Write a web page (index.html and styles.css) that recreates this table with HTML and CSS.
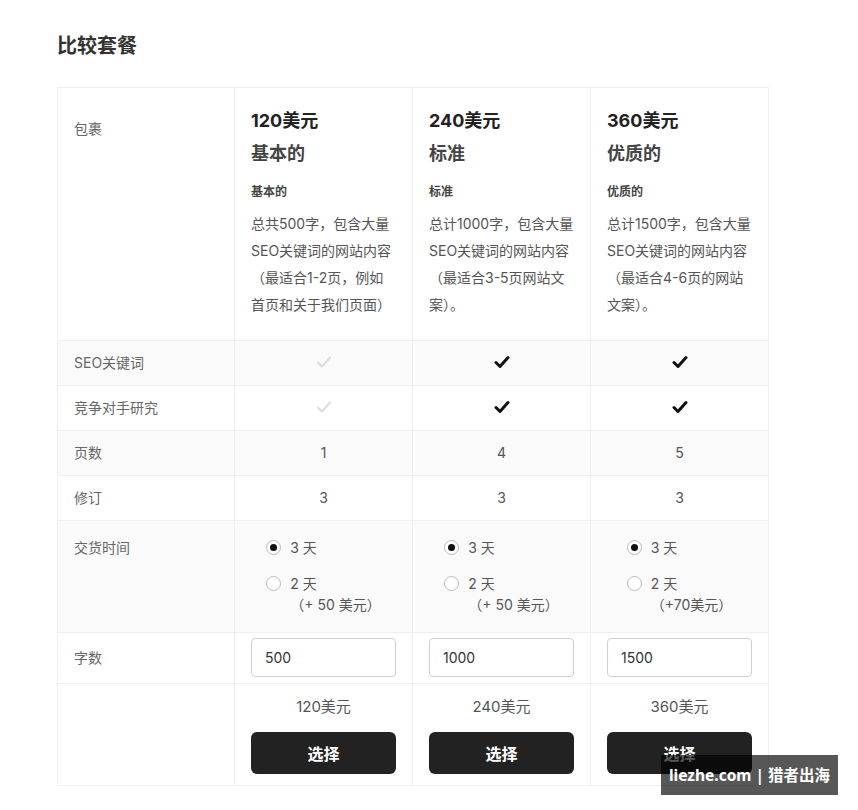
FILE: index.html
```html
<!DOCTYPE html>
<html lang="zh">
<head>
    <meta charset="UTF-8">
    <meta name="viewport" content="width=device-width, initial-scale=1.0">
    <title>比较套餐</title>
    <link rel="stylesheet" href="styles.css">
</head>
<body>
    <div class="page">
        <h2 class="title">比较套餐</h2>

        <table class="compare">
            <colgroup>
                <col class="col-label">
                <col class="col-plan">
                <col class="col-plan">
                <col class="col-plan">
            </colgroup>

            <!-- Package header -->
            <tr class="head-row">
                <td class="label head-label">包裹</td>
                <td class="plan">
                    <div class="price">120美元</div>
                    <div class="name">基本的</div>
                    <div class="tag">基本的</div>
                    <p class="desc">总共500字，包含大量SEO关键词的网站内容（最适合1-2页，例如首页和关于我们页面）</p>
                </td>
                <td class="plan">
                    <div class="price">240美元</div>
                    <div class="name">标准</div>
                    <div class="tag">标准</div>
                    <p class="desc">总计1000字，包含大量SEO关键词的网站内容（最适合3-5页网站文案）。</p>
                </td>
                <td class="plan">
                    <div class="price">360美元</div>
                    <div class="name">优质的</div>
                    <div class="tag">优质的</div>
                    <p class="desc">总计1500字，包含大量SEO关键词的网站内容（最适合4-6页的网站文案）。</p>
                </td>
            </tr>

            <tr class="shade">
                <td class="label">SEO关键词</td>
                <td class="value"><svg class="check off" viewBox="0 0 16 14"><polyline points="2,7.5 6,11.5 14,2.5"/></svg></td>
                <td class="value"><svg class="check" viewBox="0 0 16 14"><polyline points="2,7.5 6,11.5 14,2.5"/></svg></td>
                <td class="value"><svg class="check" viewBox="0 0 16 14"><polyline points="2,7.5 6,11.5 14,2.5"/></svg></td>
            </tr>

            <tr>
                <td class="label">竞争对手研究</td>
                <td class="value"><svg class="check off" viewBox="0 0 16 14"><polyline points="2,7.5 6,11.5 14,2.5"/></svg></td>
                <td class="value"><svg class="check" viewBox="0 0 16 14"><polyline points="2,7.5 6,11.5 14,2.5"/></svg></td>
                <td class="value"><svg class="check" viewBox="0 0 16 14"><polyline points="2,7.5 6,11.5 14,2.5"/></svg></td>
            </tr>

            <tr class="shade">
                <td class="label">页数</td>
                <td class="value">1</td>
                <td class="value">4</td>
                <td class="value">5</td>
            </tr>

            <tr>
                <td class="label">修订</td>
                <td class="value">3</td>
                <td class="value">3</td>
                <td class="value">3</td>
            </tr>

            <!-- Delivery options -->
            <tr class="shade delivery">
                <td class="label">交货时间</td>
                <td class="value">
                    <div class="options">
                        <label class="option"><span class="radio checked"></span><span>3 天</span></label>
                        <label class="option"><span class="radio"></span><span>2 天<br>（+ 50 美元）</span></label>
                    </div>
                </td>
                <td class="value">
                    <div class="options">
                        <label class="option"><span class="radio checked"></span><span>3 天</span></label>
                        <label class="option"><span class="radio"></span><span>2 天<br>（+ 50 美元）</span></label>
                    </div>
                </td>
                <td class="value">
                    <div class="options">
                        <label class="option"><span class="radio checked"></span><span>3 天</span></label>
                        <label class="option"><span class="radio"></span><span>2 天<br>（+70美元）</span></label>
                    </div>
                </td>
            </tr>

            <tr class="words">
                <td class="label">字数</td>
                <td class="plan"><input class="count" type="text" value="500"></td>
                <td class="plan"><input class="count" type="text" value="1000"></td>
                <td class="plan"><input class="count" type="text" value="1500"></td>
            </tr>

            <tr class="buy">
                <td class="label"></td>
                <td class="plan">
                    <div class="total">120美元</div>
                    <button class="select">选择</button>
                </td>
                <td class="plan">
                    <div class="total">240美元</div>
                    <button class="select">选择</button>
                </td>
                <td class="plan">
                    <div class="total">360美元</div>
                    <button class="select">选择</button>
                </td>
            </tr>
        </table>
    </div>

    <!-- Watermark -->
    <div class="watermark">liezhe.com | 猎者出海</div>
</body>
</html>
```

FILE: styles.css
```css
* {
    margin: 0;
    padding: 0;
    box-sizing: border-box;
}

body {
    font-family: Inter, 'Noto Sans CJK SC', sans-serif;
    background: #ffffff;
    color: #555;
    position: relative;
    min-height: 810px;
}

.page {
    padding: 34px 0 0 57px;
}

.title {
    font-size: 20px;
    line-height: 24px;
    font-weight: bold;
    color: #333;
    margin-bottom: 29px;
}

/* Compare table */
.compare {
    border-collapse: collapse;
    table-layout: fixed;
    width: 711px;
}

.col-label {
    width: 177px;
}

.col-plan {
    width: 178px;
}

.compare td {
    border: 1px solid #efefef;
    padding: 11px 15px 12px 16px;
    vertical-align: top;
    font-size: 14px;
    line-height: 21px;
    color: #666;
    text-align: left;
}

.compare .value {
    text-align: center;
    padding-left: 15px;
    padding-right: 15px;
    color: #555;
}

.shade td {
    background: #fafafa;
}

/* Header row */
.head-row td {
    padding: 19px 15px 22px 16px;
}

.head-row .head-label {
    padding-top: 30px;
}

.price {
    font-size: 18px;
    line-height: 28px;
    font-weight: bold;
    color: #222;
}

.name {
    font-size: 18px;
    line-height: 32px;
    font-weight: bold;
    color: #444;
    margin-top: 3px;
}

.tag {
    font-size: 12px;
    line-height: 20px;
    font-weight: bold;
    color: #444;
    margin-top: 12px;
}

.desc {
    font-size: 14px;
    line-height: 27px;
    color: #555;
    margin-top: 8px;
}

/* Check marks */
.check {
    width: 16px;
    height: 14px;
    display: inline-block;
    vertical-align: middle;
    margin-top: -4px;
}

.check polyline {
    fill: none;
    stroke: #111;
    stroke-width: 3;
    stroke-linecap: round;
    stroke-linejoin: round;
}

.check.off polyline {
    stroke: #dcdcdc;
    stroke-width: 2;
}

/* Delivery radios */
.delivery td {
    padding-top: 16px;
    padding-bottom: 17px;
}

.options {
    display: inline-block;
    text-align: left;
}

.option {
    display: flex;
    align-items: flex-start;
    gap: 9px;
    color: #555;
}

.option + .option {
    margin-top: 15px;
}

.radio {
    width: 15px;
    height: 15px;
    margin-top: 3px;
    border: 1px solid #bbb;
    border-radius: 50%;
    background: #fff;
    flex-shrink: 0;
    position: relative;
}

.radio.checked::after {
    content: '';
    position: absolute;
    top: 3px;
    left: 3px;
    width: 7px;
    height: 7px;
    border-radius: 50%;
    background: #111;
}

/* Word count */
.words td {
    vertical-align: middle;
    padding-top: 5px;
    padding-bottom: 6px;
}

.count {
    width: 145px;
    height: 39px;
    border: 1px solid #cfcfcf;
    border-radius: 4px;
    padding: 0 13px;
    font-family: Inter, 'Noto Sans CJK SC', sans-serif;
    font-size: 14px;
    color: #333;
    background: #fff;
}

/* Buy row */
.buy td {
    padding-top: 12px;
    padding-bottom: 11px;
}

.total {
    font-size: 15px;
    line-height: 22px;
    color: #555;
    text-align: center;
    width: 145px;
}

.select {
    display: block;
    width: 145px;
    height: 42px;
    margin-top: 14px;
    border: none;
    border-radius: 6px;
    background: #222;
    color: #fff;
    font-family: Inter, 'Noto Sans CJK SC', sans-serif;
    font-size: 16px;
    font-weight: bold;
    cursor: pointer;
}

.watermark {
    position: absolute;
    left: 661px;
    top: 755px;
    width: 177px;
    height: 40px;
    background: rgba(0, 0, 0, 0.66);
    color: #fff;
    font-family: 'Noto Sans', 'Noto Sans CJK SC', sans-serif;
    font-size: 15.5px;
    font-weight: bold;
    line-height: 40px;
    text-align: center;
}
```
